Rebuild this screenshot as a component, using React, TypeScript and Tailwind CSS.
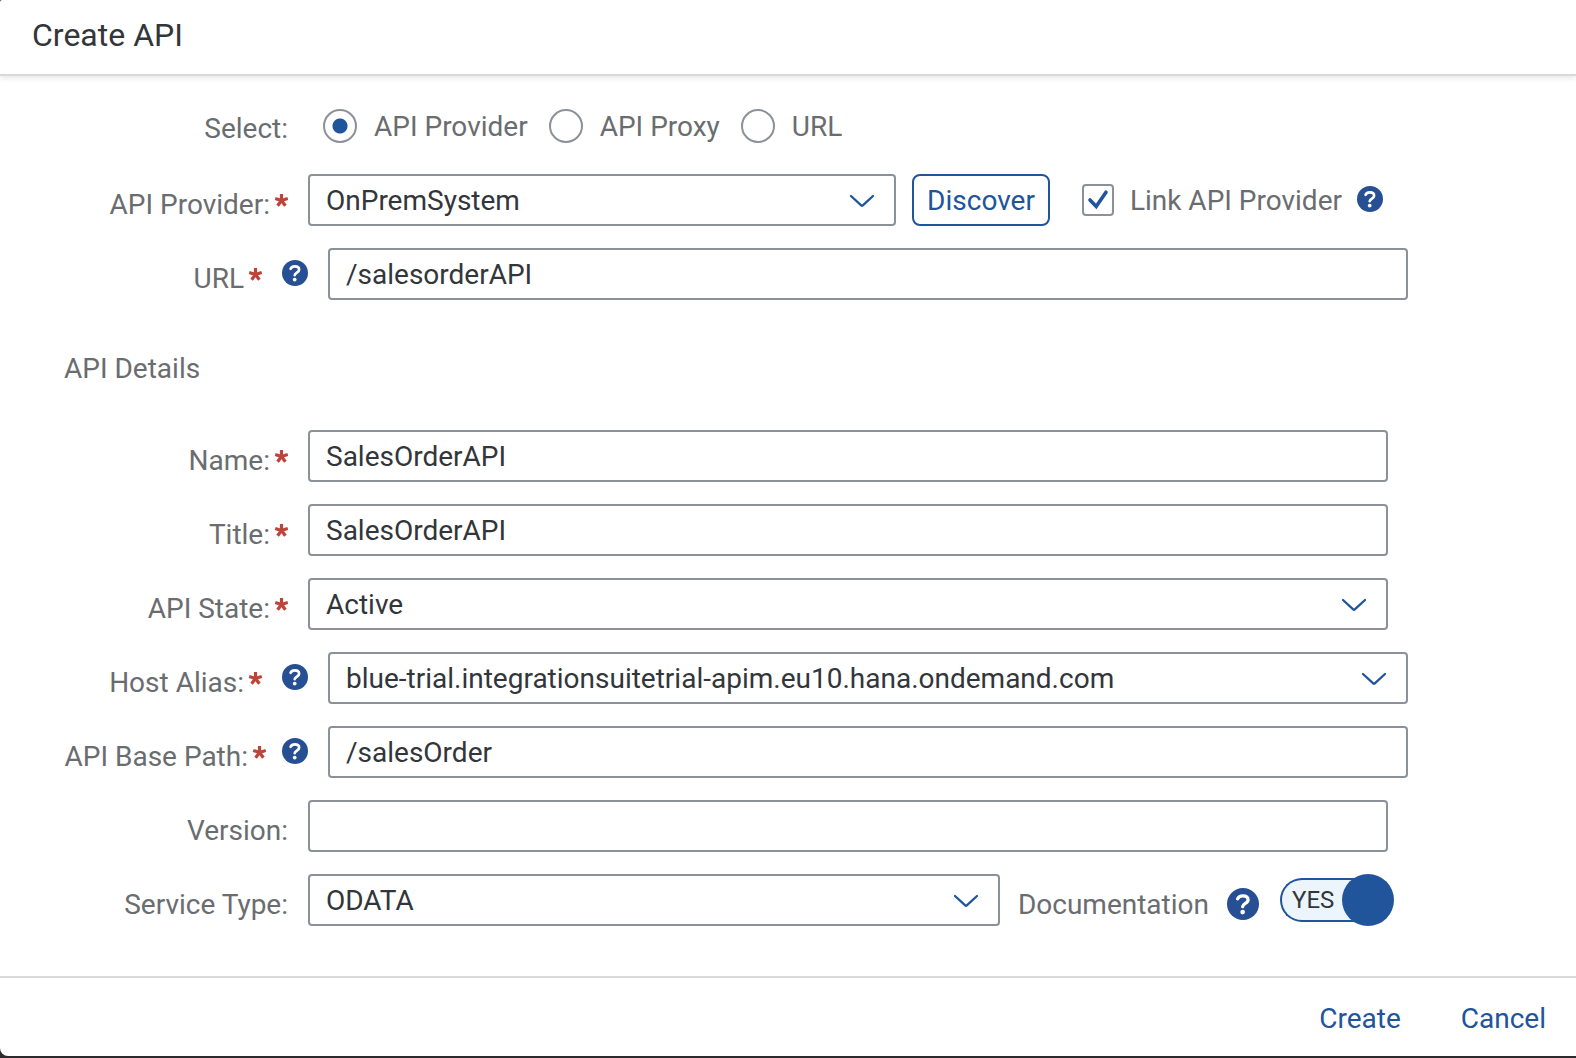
import { useState, type ReactNode } from "react";

const fieldClass =
  "h-[52px] w-full appearance-none rounded-[4px] border-2 border-[#8b9099] bg-white px-4 text-[28px] text-[#32363a] outline-none";

function HelpIcon({ large = false }: { large?: boolean }) {
  return (
    <svg
      viewBox="0 0 26 26"
      className={large ? "size-8 shrink-0" : "size-[26px] shrink-0"}
      role="img"
      aria-label="Help"
    >
      <circle cx="13" cy="13" r="13" fill="#264f94" />
      <path
        d="M8.6 8.8C9.3 7.2 10.9 6.4 12.8 6.4c2.5 0 4.3 1.2 4.3 3.3 0 2.9-4.1 2.7-4.4 5.5"
        fill="none"
        stroke="#fff"
        strokeWidth="2.7"
        strokeLinecap="round"
        strokeLinejoin="round"
      />
      <circle cx="12.7" cy="19.6" r="1.9" fill="#fff" />
    </svg>
  );
}

function Required() {
  return (
    <svg viewBox="0 0 14 14" className="mb-[10px] ml-1 size-[14px] shrink-0" aria-hidden="true">
      <path
        d="M7.5 7.5V1M7.5 7.5L1.2 5.4M7.5 7.5l6.3-2.1M7.5 7.5l-3.9 5.3M7.5 7.5l3.9 5.3"
        fill="none"
        stroke="#bd443b"
        strokeWidth="3.2"
      />
    </svg>
  );
}

type RowProps = {
  id?: string;
  label: string;
  required?: boolean;
  help?: boolean;
  wideGap?: boolean;
  children: ReactNode;
};

function Row({ id, label, required, help, wideGap, children }: RowProps) {
  return (
    <div className={help ? "flex items-center gap-5 pr-[168px]" : "flex items-center gap-5 pr-[188px]"}>
      <div
        className={
          help
            ? "flex w-[308px] shrink-0 items-center justify-end"
            : "flex w-72 shrink-0 items-center justify-end"
        }
      >
        <label htmlFor={id} className="flex items-center whitespace-nowrap pt-[10px] text-[#6a6d70]">
          {label}
          {required && <Required />}
        </label>
        {help && (
          <span className={wideGap ? "ml-5 flex pb-0.5" : "ml-4 flex pb-0.5"}>
            <HelpIcon />
          </span>
        )}
      </div>
      <div className="flex min-w-0 flex-1 items-center">{children}</div>
    </div>
  );
}

function Select({ id, value }: { id: string; value: string }) {
  return (
    <div className="relative min-w-0 flex-1">
      <select id={id} className={`${fieldClass} pt-0.5`} defaultValue={value}>
        <option>{value}</option>
      </select>
      <svg
        viewBox="0 0 26 14"
        className="pointer-events-none absolute right-[21px] top-5 h-[14px] w-[26px]"
        aria-hidden="true"
      >
        <path
          d="M2 2l10.2 9.4q.8.7 1.6 0L24 2"
          fill="none"
          stroke="#20549b"
          strokeWidth="2.3"
          strokeLinecap="round"
        />
      </svg>
    </div>
  );
}

function Radio({ label, checked, onSelect }: { label: string; checked: boolean; onSelect: () => void }) {
  return (
    <label className="flex items-center gap-[17px] text-[#6a6d70]">
      <input
        type="radio"
        name="source"
        checked={checked}
        onChange={onSelect}
        className="size-[34px] shrink-0 appearance-none rounded-full border-2 border-[#8b9099] bg-white checked:bg-[radial-gradient(circle,#20549b_7px,transparent_8px)]"
      />
      <span className="pt-0.5">{label}</span>
    </label>
  );
}

export default function App() {
  const [source, setSource] = useState("API Provider");
  const [linked, setLinked] = useState(true);
  const [docs, setDocs] = useState(true);

  return (
    <div className="min-h-screen bg-[#2c2a2d] pb-0.5 font-[Roboto,'Liberation_Sans',sans-serif] text-[28px] leading-9">
      <form
        className="flex min-h-[calc(100vh-2px)] flex-col rounded-bl-lg rounded-tl-[2px] bg-white"
        onSubmit={(e) => e.preventDefault()}
      >
        <header className="border-b-2 border-[#d9d9d9] px-8 pb-[19px] pt-[15px] shadow-[0_2px_6px_rgba(0,0,0,0.1)]">
          <h1 className="text-[32px] leading-10 text-[#32363a]">Create API</h1>
        </header>

        <main className="flex flex-1 flex-col gap-[22px] pb-12 pt-6">
          <div className="flex h-[52px] items-center gap-[35px]" role="radiogroup" aria-labelledby="source-label">
            <span id="source-label" className="w-72 shrink-0 pt-1.5 text-right text-[#6a6d70]">
              Select:
            </span>
            <div className="flex items-center gap-[21px]">
              {["API Provider", "API Proxy", "URL"].map((name) => (
                <Radio key={name} label={name} checked={source === name} onSelect={() => setSource(name)} />
              ))}
            </div>
          </div>

          <Row id="provider" label="API Provider:" required>
            <Select id="provider" value="OnPremSystem" />
            <button
              type="button"
              className="ml-4 h-[52px] shrink-0 rounded-lg border-2 border-[#20549b] px-[13px] pt-0.5 text-[#20549b]"
            >
              Discover
            </button>
            <label className="ml-8 flex shrink-0 items-center gap-4 text-[#6a6d70]">
              <span className="relative flex size-8">
                <input
                  type="checkbox"
                  checked={linked}
                  onChange={(e) => setLinked(e.target.checked)}
                  className="size-8 appearance-none rounded-[4px] border-2 border-[#8b9099] bg-white"
                />
                {linked && (
                  <svg viewBox="0 0 32 32" className="pointer-events-none absolute inset-0 size-8" aria-hidden="true">
                    <path
                      d="M8 16l6.2 6.4L24 8.2"
                      fill="none"
                      stroke="#20549b"
                      strokeWidth="3.6"
                      strokeLinecap="round"
                    />
                  </svg>
                )}
              </span>
              <span className="pt-0.5">Link API Provider</span>
            </label>
            <span className="ml-[15px] mr-[5px] flex pb-0.5">
              <HelpIcon />
            </span>
          </Row>

          <Row id="url" label="URL" required help wideGap>
            <input id="url" type="text" className={fieldClass} defaultValue="/salesorderAPI" />
          </Row>

          <h2 className="mb-[21px] mt-[29px] px-16 text-[#6a6d70]">API Details</h2>

          <Row id="name" label="Name:" required>
            <input id="name" type="text" className={fieldClass} defaultValue="SalesOrderAPI" />
          </Row>
          <Row id="title" label="Title:" required>
            <input id="title" type="text" className={fieldClass} defaultValue="SalesOrderAPI" />
          </Row>
          <Row id="state" label="API State:" required>
            <Select id="state" value="Active" />
          </Row>
          <Row id="host" label="Host Alias:" required help wideGap>
            <Select id="host" value="blue-trial.integrationsuitetrial-apim.eu10.hana.ondemand.com" />
          </Row>
          <Row id="path" label="API Base Path:" required help>
            <input id="path" type="text" className={fieldClass} defaultValue="/salesOrder" />
          </Row>
          <Row id="version" label="Version:">
            <input id="version" type="text" className={fieldClass} />
          </Row>
          <Row id="service" label="Service Type:">
            <Select id="service" value="ODATA" />
            <label htmlFor="docs" className="ml-[18px] shrink-0 pt-[10px] text-[#6a6d70]">
              Documentation
            </label>
            <span className="ml-[18px] mr-px flex shrink-0 pt-2">
              <HelpIcon large />
            </span>
            <button
              id="docs"
              type="button"
              role="switch"
              aria-checked={docs}
              onClick={() => setDocs(!docs)}
              className="-mr-[6px] ml-5 flex h-[52px] w-[114px] shrink-0 items-center"
            >
              <span className="flex h-11 w-[88px] items-center rounded-l-full border-2 border-r-0 border-[#20549b] bg-[#ecf4fc] pl-[10px] text-2xl text-[#32363a]">
                {docs ? "YES" : "NO"}
              </span>
              <span className="-ml-[26px] size-[52px] shrink-0 rounded-full bg-[#20549b]" />
            </button>
          </Row>
        </main>

        <footer className="flex justify-end gap-7 border-t-2 border-[#d9d9d9] px-[14px] pb-[11px] pt-[15px] text-[#20549b]">
          <button type="submit" className="h-[52px] px-4">
            Create
          </button>
          <button type="button" className="h-[52px] px-4">
            Cancel
          </button>
        </footer>
      </form>
    </div>
  );
}
